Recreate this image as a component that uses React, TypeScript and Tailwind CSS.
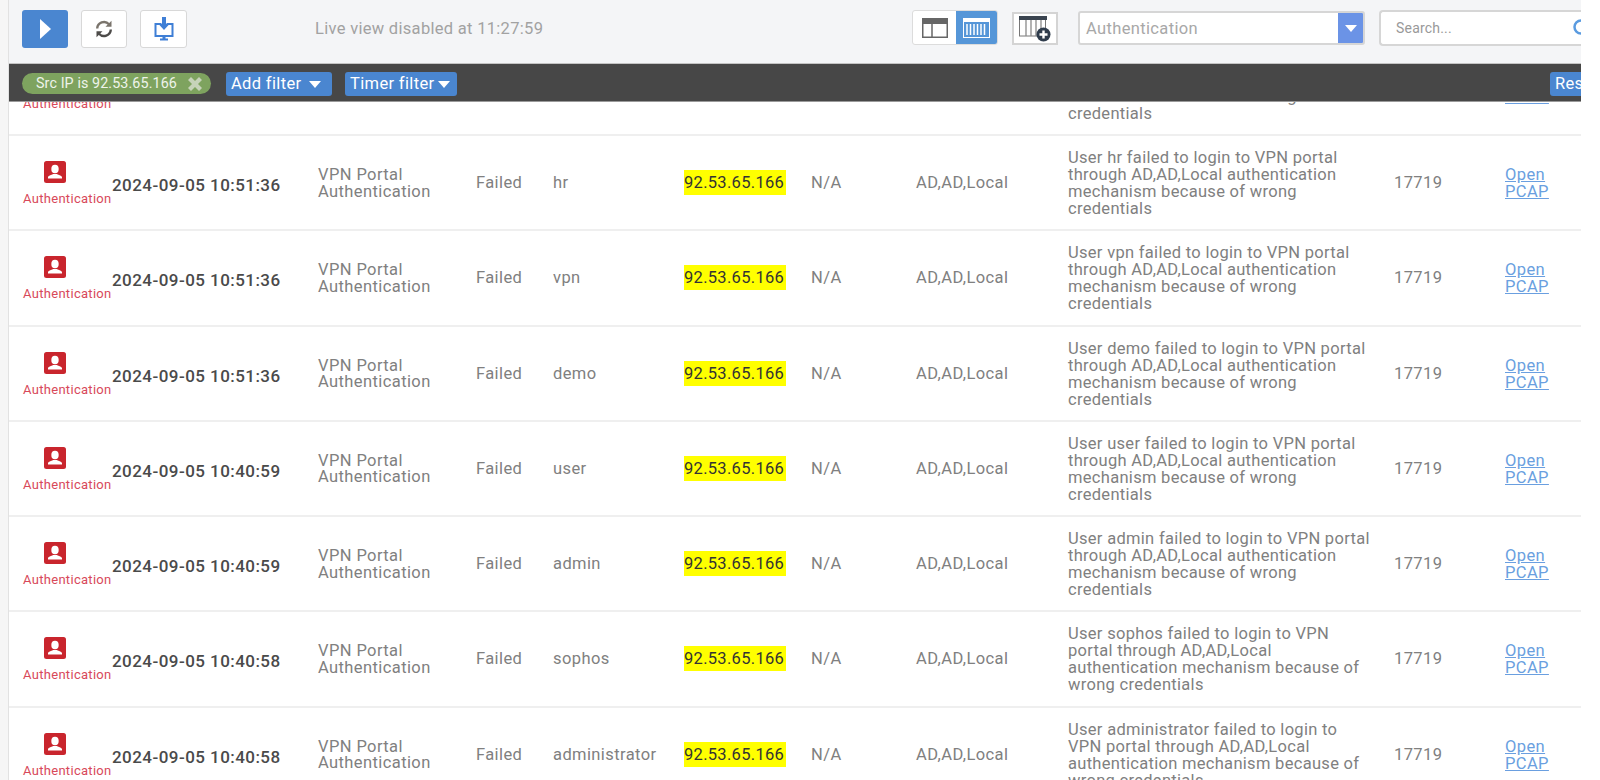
import React from "react";

type Row = {
  time: string;
  user: string;
  lines: string[];
};

const rows: Row[] = [
  { time: "2024-09-05 10:51:37", user: "guest", lines: ["User guest failed to login to VPN portal", "through AD,AD,Local authentication", "mechanism because of wrong", "credentials"] },
  { time: "2024-09-05 10:51:36", user: "hr", lines: ["User hr failed to login to VPN portal", "through AD,AD,Local authentication", "mechanism because of wrong", "credentials"] },
  { time: "2024-09-05 10:51:36", user: "vpn", lines: ["User vpn failed to login to VPN portal", "through AD,AD,Local authentication", "mechanism because of wrong", "credentials"] },
  { time: "2024-09-05 10:51:36", user: "demo", lines: ["User demo failed to login to VPN portal", "through AD,AD,Local authentication", "mechanism because of wrong", "credentials"] },
  { time: "2024-09-05 10:40:59", user: "user", lines: ["User user failed to login to VPN portal", "through AD,AD,Local authentication", "mechanism because of wrong", "credentials"] },
  { time: "2024-09-05 10:40:59", user: "admin", lines: ["User admin failed to login to VPN portal", "through AD,AD,Local authentication", "mechanism because of wrong", "credentials"] },
  { time: "2024-09-05 10:40:58", user: "sophos", lines: ["User sophos failed to login to VPN", "portal through AD,AD,Local", "authentication mechanism because of", "wrong credentials"] },
  { time: "2024-09-05 10:40:58", user: "administrator", lines: ["User administrator failed to login to", "VPN portal through AD,AD,Local", "authentication mechanism because of", "wrong credentials"] },
];

function UserIcon() {
  return (
    <svg width="22" height="22" viewBox="0 0 22 22">
      <rect width="22" height="22" rx="2.5" fill="#c9252d" />
      <ellipse cx="11" cy="8" rx="3.700" ry="4.300" fill="#fff" />
      <path d="M4 17.500v-1.300c0-1.600 3.500-2 5-3.200h4c1.500 1.200 5 1.600 5 3.200v1.300z" fill="#fff" />
    </svg>
  );
}

function ArrowDown() {
  return <span className="inline-block w-0 h-0 border-x-[6px] border-x-transparent border-t-[7px] border-t-white" />;
}

function RefreshIcon() {
  return (
    <svg width="20" height="20" viewBox="0 0 20 20" fill="none">
      <path d="M3.200 9.500a6.800 6.800 0 0 1 11.800-4.300" stroke="#7a746c" strokeWidth="2.400" />
      <path d="M16.800 10.500a6.800 6.800 0 0 1-11.800 4.300" stroke="#4d4b49" strokeWidth="2.400" />
      <path d="M17.500 1.800v6h-6z" fill="#7a746c" />
      <path d="M2.500 18.200v-6h6z" fill="#4d4b49" />
    </svg>
  );
}

function DownloadIcon() {
  return (
    <svg width="20" height="24" viewBox="0 0 20 24" fill="none">
      <path d="M7.500 7H1.500v12h17V7h-6" stroke="#3f7fd6" strokeWidth="2" />
      <path d="M8 0h4v7h3.500L10 13 4.500 7H8z" fill="#3f7fd6" />
      <path d="M6 22.500h8" stroke="#3f7fd6" strokeWidth="2" />
      <path d="M8.500 19h3v3h-3z" fill="#3f7fd6" />
    </svg>
  );
}

function PanelIcon() {
  return (
    <svg width="26" height="20" viewBox="0 0 26 20" fill="none">
      <rect x="0.750" y="0.750" width="24.500" height="18.500" stroke="#666" strokeWidth="1.500" />
      <rect x="0" y="0" width="26" height="6" fill="#666" />
      <path d="M10 6v13" stroke="#666" strokeWidth="1.500" />
    </svg>
  );
}

function ColumnsIcon() {
  return (
    <svg width="27" height="20" viewBox="0 0 27 20" fill="none">
      <rect x="0.500" y="0.500" width="26" height="19" stroke="#fff" />
      <rect x="0" y="0" width="27" height="4" fill="#fff" />
      <path d="M4 6v11M7.500 6v11M11 6v11M14.500 6v11M18 6v11M21.500 6v11" stroke="#fff" strokeWidth="1.500" />
    </svg>
  );
}

function AddColumnIcon() {
  return (
    <svg width="32" height="26" viewBox="0 0 32 26" fill="none">
      <rect x="0.500" y="1" width="26" height="19" stroke="#777" />
      <rect x="0" y="0" width="28" height="4" fill="#3a4450" />
      <path d="M7 4v16M12 4v16M17 4v16M22 4v16" stroke="#8a8a8a" strokeWidth="1.300" />
      <circle cx="24.500" cy="18.500" r="7" fill="#2f3c4c" />
      <path d="M24.500 14.500v8M20.500 18.500h8" stroke="#fff" strokeWidth="2.400" />
    </svg>
  );
}

function LogRow({ row }: { row: Row }) {
  return (
    <div className="flex h-[95.3px] shrink-0 border-b-2 border-[#efefef] text-[16.5px] leading-[17px] tracking-[0.4px] text-[#808080]">
      <div className="w-[103px] flex flex-col items-start pl-[14px] pt-[25px]">
        <span className="ml-[21px]"><UserIcon /></span>
        <span className="mt-[9px] text-[13px] leading-[14px] tracking-[0.3px] text-[#d8495a] whitespace-nowrap">Authentication</span>
      </div>
      <div className="w-[206px] pt-[41px] text-[17px] font-medium tracking-[0.45px] text-[#4a4a4a] whitespace-nowrap">{row.time}</div>
      <div className="w-[158px] pt-[31px] leading-[16.5px]">VPN Portal<br />Authentication</div>
      <div className="w-[77px] pt-[38px]">Failed</div>
      <div className="w-[131px] pt-[38px] whitespace-nowrap">{row.user}</div>
      <div className="w-[127px] pt-[34px]">
        <span className="block w-[102px] h-[25px] bg-[#ffff00] text-[#333] leading-[25px] tracking-[0.3px] whitespace-nowrap">92.53.65.166</span>
      </div>
      <div className="w-[105px] pt-[38px]">N/A</div>
      <div className="w-[152px] pt-[38px] whitespace-nowrap">AD,AD,Local</div>
      <div className="w-[326px] pt-[13px] tracking-[0.3px] whitespace-nowrap">
        {row.lines.map((l) => <div key={l}>{l}</div>)}
      </div>
      <div className="w-[111px] pt-[38px]">17719</div>
      <div className="pt-[30px] text-[#6a9fe0] underline">Open<br />PCAP</div>
    </div>
  );
}

export default function App() {
  return (
    <div className="w-[1600px] h-[780px] overflow-hidden bg-white flex font-['Roboto',sans-serif]">
      <div className="w-[9px] h-full shrink-0 bg-[#f6f6f6] border-r border-[#e2e2e2]" />
      <div className="w-[1572px] h-full flex flex-col overflow-hidden bg-white">
        <div className="relative z-10 shrink-0 overflow-hidden">
          <div className="h-[64px] bg-[#f4f5f7] border-b border-[#c4c4c4] flex items-start pt-[10px] pl-[13px]">
            <button className="shrink-0 w-[46px] h-[38px] rounded-[3px] bg-[#4a86d0] flex items-center justify-center">
              <span className="w-0 h-0 border-y-[10px] border-y-transparent border-l-[11px] border-l-white" />
            </button>
            <button className="shrink-0 ml-[13px] w-[46px] h-[38px] rounded-[3px] bg-white border border-[#d8d8d8] flex items-center justify-center">
              <RefreshIcon />
            </button>
            <button className="shrink-0 ml-[13px] w-[47px] h-[38px] rounded-[3px] bg-white border border-[#d8d8d8] flex items-center justify-center">
              <DownloadIcon />
            </button>
            <span className="shrink-0 ml-[128px] w-[597px] mt-[9px] text-[16.5px] leading-[20px] tracking-[0.3px] text-[#a2a2a2] whitespace-nowrap">Live view disabled at 11:27:59</span>
            <div className="shrink-0 w-[86px] h-[35px] rounded-[3px] bg-white border border-[#dcdcdc] flex overflow-hidden">
              <div className="w-[43px] flex items-center justify-center"><PanelIcon /></div>
              <div className="flex-1 bg-[#5596d8] flex items-center justify-center"><ColumnsIcon /></div>
            </div>
            <div className="shrink-0 ml-[14px] mt-[2px] w-[46px] h-[33px] bg-white border-2 border-[#d4d4d4] flex items-center justify-center">
              <AddColumnIcon />
            </div>
            <div className="shrink-0 ml-[20px] mt-[1px] w-[287px] h-[34px] rounded-[3px] bg-white border-2 border-[#d6d6d6] flex items-stretch overflow-hidden">
              <span className="flex-1 pl-[6px] text-[16.5px] leading-[31px] tracking-[0.35px] text-[#a8a8a8]">Authentication</span>
              <span className="w-[25px] bg-[#6b93e6] flex items-center justify-center">
                <span className="w-0 h-0 border-x-[6px] border-x-transparent border-t-[7px] border-t-white" />
              </span>
            </div>
            <div className="shrink-0 ml-[14px] w-[210px] h-[36px] rounded-l-[4px] bg-white border-2 border-r-0 border-[#d6d6d6] relative">
              <span className="absolute left-[15px] top-[7px] text-[14px] leading-[18px] tracking-[0.2px] text-[#999]">Search...</span>
              <svg className="absolute left-[190px] top-[5px]" width="20" height="20" viewBox="0 0 20 20" fill="none">
                <circle cx="10" cy="10" r="6.500" stroke="#5a9be0" strokeWidth="2.500" />
              </svg>
            </div>
          </div>
          <div className="h-[38px] bg-[#474747] flex items-center pl-[13px] pt-[2px] text-white relative border-b border-[#9a9a9a]">
            <span className="shrink-0 -mt-[1px] pt-[1px] h-[21px] w-[189px] rounded-full bg-[#7ea35f] text-[14.3px] tracking-[0.1px] text-[#eef3ea] flex items-center pl-[14px] whitespace-nowrap">
              Src IP is 92.53.65.166
              <svg className="ml-[11px]" width="14" height="14" viewBox="0 0 14 14">
                <path d="M3 0l4 4 4-4 3 3-4 4 4 4-3 3-4-4-4 4-3-3 4-4-4-4z" fill="#c7d3ba" />
              </svg>
            </span>
            <span className="shrink-0 ml-[15px] w-[106px] h-[24px] pt-[1px] rounded-[3px] bg-[#4a86d0] pl-[5px] text-[16.5px] tracking-[0.35px] flex items-center gap-2 whitespace-nowrap">Add filter <ArrowDown /></span>
            <span className="shrink-0 ml-[13px] w-[112px] h-[24px] pt-[1px] rounded-[3px] bg-[#4a86d0] pl-[5px] text-[16.5px] tracking-[0.35px] flex items-center gap-1 whitespace-nowrap">Timer filter <ArrowDown /></span>
            <span className="absolute left-[1541px] top-[8px] w-[60px] h-[24px] rounded-[3px] bg-[#4a86d0] pl-[5px] text-[16.5px] tracking-[0.35px] flex items-center">Reset</span>
          </div>
        </div>
        <div className="flex flex-col -mt-[61.3px]">
          {rows.map((r) => <LogRow key={r.user} row={r} />)}
        </div>
      </div>
    </div>
  );
}
